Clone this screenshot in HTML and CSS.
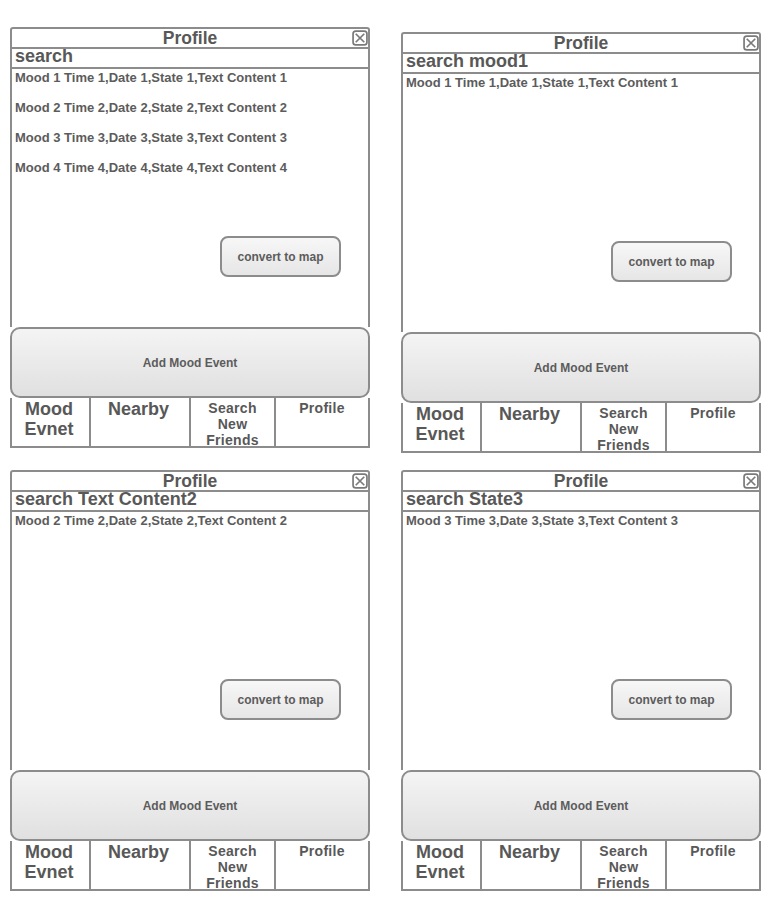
FILE: index.html
```html
<!DOCTYPE html>
<html lang="en">
<head>
    <meta charset="UTF-8">
    <meta name="viewport" content="width=device-width, initial-scale=1.0">
    <title>Mood Profile Wireframes</title>
    <link rel="stylesheet" href="styles.css">
</head>
<body>
    <div class="board">
        <!-- Screen 1: all moods -->
        <div class="screen">
            <div class="title-bar">
                Profile
                <svg class="close-icon" viewBox="0 0 15 15"><rect x="1" y="1" width="13" height="13" rx="2.5"/><path d="M3.5 3.5 L11.5 11.5 M11.5 3.5 L3.5 11.5"/></svg>
            </div>
            <div class="search-bar">search</div>
            <div class="mood-list">
                <p class="mood-item">Mood 1 Time 1,Date 1,State 1,Text Content 1</p>
                <p class="mood-item">Mood 2 Time 2,Date 2,State 2,Text Content 2</p>
                <p class="mood-item">Mood 3 Time 3,Date 3,State 3,Text Content 3</p>
                <p class="mood-item">Mood 4 Time 4,Date 4,State 4,Text Content 4</p>
                <button class="map-btn">convert to map</button>
            </div>
            <button class="add-btn">Add Mood Event</button>
            <div class="tab-bar">
                <div class="tab tab-large">Mood<br>Evnet</div>
                <div class="tab tab-large">Nearby</div>
                <div class="tab tab-small">Search<br>New<br>Friends</div>
                <div class="tab tab-small">Profile</div>
            </div>
        </div>

        <!-- Screen 2: search by mood -->
        <div class="screen shifted">
            <div class="title-bar">
                Profile
                <svg class="close-icon" viewBox="0 0 15 15"><rect x="1" y="1" width="13" height="13" rx="2.5"/><path d="M3.5 3.5 L11.5 11.5 M11.5 3.5 L3.5 11.5"/></svg>
            </div>
            <div class="search-bar">search mood1</div>
            <div class="mood-list">
                <p class="mood-item">Mood 1 Time 1,Date 1,State 1,Text Content 1</p>
                <button class="map-btn">convert to map</button>
            </div>
            <button class="add-btn">Add Mood Event</button>
            <div class="tab-bar">
                <div class="tab tab-large">Mood<br>Evnet</div>
                <div class="tab tab-large">Nearby</div>
                <div class="tab tab-small">Search<br>New<br>Friends</div>
                <div class="tab tab-small">Profile</div>
            </div>
        </div>

        <!-- Screen 3: search by text -->
        <div class="screen">
            <div class="title-bar">
                Profile
                <svg class="close-icon" viewBox="0 0 15 15"><rect x="1" y="1" width="13" height="13" rx="2.5"/><path d="M3.5 3.5 L11.5 11.5 M11.5 3.5 L3.5 11.5"/></svg>
            </div>
            <div class="search-bar">search Text Content2</div>
            <div class="mood-list">
                <p class="mood-item">Mood 2 Time 2,Date 2,State 2,Text Content 2</p>
                <button class="map-btn">convert to map</button>
            </div>
            <button class="add-btn">Add Mood Event</button>
            <div class="tab-bar">
                <div class="tab tab-large">Mood<br>Evnet</div>
                <div class="tab tab-large">Nearby</div>
                <div class="tab tab-small">Search<br>New<br>Friends</div>
                <div class="tab tab-small">Profile</div>
            </div>
        </div>

        <!-- Screen 4: search by state -->
        <div class="screen">
            <div class="title-bar">
                Profile
                <svg class="close-icon" viewBox="0 0 15 15"><rect x="1" y="1" width="13" height="13" rx="2.5"/><path d="M3.5 3.5 L11.5 11.5 M11.5 3.5 L3.5 11.5"/></svg>
            </div>
            <div class="search-bar">search State3</div>
            <div class="mood-list">
                <p class="mood-item">Mood 3 Time 3,Date 3,State 3,Text Content 3</p>
                <button class="map-btn">convert to map</button>
            </div>
            <button class="add-btn">Add Mood Event</button>
            <div class="tab-bar">
                <div class="tab tab-large">Mood<br>Evnet</div>
                <div class="tab tab-large">Nearby</div>
                <div class="tab tab-small">Search<br>New<br>Friends</div>
                <div class="tab tab-small">Profile</div>
            </div>
        </div>
    </div>
</body>
</html>
```

FILE: styles.css
```css
/* Global Styles */
* {
    box-sizing: border-box;
    margin: 0;
    padding: 0;
}
body {
    font-family: "Liberation Sans", Arial, sans-serif;
    background-color: #fff;
    color: #585858;
}

/* Board of four screens */
.board {
    display: grid;
    grid-template-columns: 360px 360px;
    column-gap: 31px;
    row-gap: 17px;
    padding: 27px 0 0 10px;
    align-items: start;
}
.screen {
    width: 360px;
    display: flex;
    flex-direction: column;
}
.screen.shifted {
    margin-top: 5px;
}

/* Title bar */
.title-bar {
    position: relative;
    height: 22px;
    border: 2px solid #8c8c8c;
    border-radius: 3px 3px 0 0;
    text-align: center;
    font-size: 17.5px;
    font-weight: bold;
    line-height: 18px;
}
.close-icon {
    position: absolute;
    right: 0;
    top: 1px;
    width: 16px;
    height: 16px;
    fill: none;
    stroke: #7a7a7a;
    stroke-width: 1.6;
}

/* Search */
.search-bar {
    height: 20px;
    border: 2px solid #8c8c8c;
    border-top: none;
    padding-left: 3px;
    font-size: 18px;
    font-weight: bold;
    line-height: 14px;
}

/* Mood list */
.mood-list {
    height: 258px;
    border-left: 2px solid #8c8c8c;
    border-right: 2px solid #8c8c8c;
    padding: 1px 27px 50px 3px;
    display: flex;
    flex-direction: column;
}
.mood-item {
    font-size: 13px;
    font-weight: bold;
    line-height: 15px;
    margin-bottom: 15px;
    color: #5c5c5c;
}
.map-btn {
    margin-top: auto;
    align-self: flex-end;
    width: 121px;
    height: 41px;
    border: 2px solid #8c8c8c;
    border-radius: 8px;
    background: linear-gradient(#f7f7f7, #e6e6e6);
    font-family: inherit;
    font-size: 12px;
    font-weight: bold;
    color: #5c5c5c;
}

/* Add button */
.add-btn {
    height: 71px;
    border: 2px solid #8c8c8c;
    border-radius: 10px;
    background: linear-gradient(#f4f4f4, #e0e0e0);
    font-family: inherit;
    font-size: 12px;
    font-weight: bold;
    color: #5c5c5c;
}

/* Tab bar */
.tab-bar {
    display: grid;
    grid-template-columns: 79px 100px 85px 1fr;
    height: 50px;
    border: 2px solid #8c8c8c;
    border-top: none;
}
.tab {
    border-right: 2px solid #8c8c8c;
    text-align: center;
    font-weight: bold;
}
.tab:last-child {
    border-right: none;
}
.tab-large {
    font-size: 18px;
    line-height: 20px;
    padding: 1px 3px 0 0;
}
.tab-small {
    font-size: 14px;
    line-height: 16px;
    padding-top: 2px;
    letter-spacing: 0.3px;
}
```
